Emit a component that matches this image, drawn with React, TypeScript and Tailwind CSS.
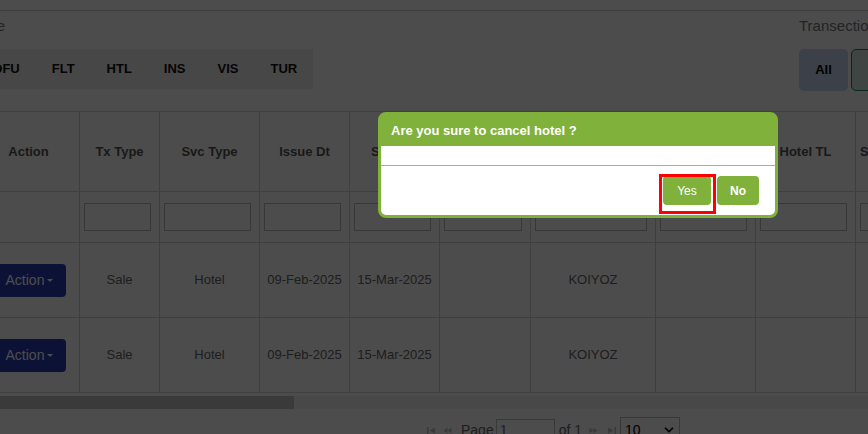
import { ChevronDown } from 'lucide-react'

const serviceTabs = ['DFU', 'FLT', 'HTL', 'INS', 'VIS', 'TUR']

const columns = [
  { title: 'Action', col: 'w-[102px]', filter: false },
  { title: 'Tx Type', col: 'w-[80px]', filter: true },
  { title: 'Svc Type', col: 'w-[100px]', filter: true },
  { title: 'Issue Dt', col: 'w-[90px]', filter: true },
  { title: 'Start Dt', col: 'w-[90px]', filter: true },
  { title: 'End Dt', col: 'w-[91px]', filter: true },
  { title: 'Conf No', col: 'w-[125px]', filter: true },
  { title: 'Hotel Name', col: 'w-[100px]', filter: true },
  { title: 'Hotel TL', col: 'w-[100px]', filter: true },
  { title: 'Supplier Name', col: 'w-[100px]', filter: true },
  { title: 'Status', col: 'w-[100px]', filter: true },
]

const rows = [
  ['Sale', 'Hotel', '09-Feb-2025', '15-Mar-2025', '', 'KOIYOZ', '', '', '', ''],
  ['Sale', 'Hotel', '09-Feb-2025', '15-Mar-2025', '', 'KOIYOZ', '', '', '', ''],
]

const SeekIcon = ({ flip, bar }: { flip?: boolean; bar?: boolean }) => (
  <svg width="9" height="7" viewBox="0 0 9 7" className={flip ? '-scale-x-100' : ''} fill="#c4c4c4">
    {bar ? (
      <>
        <rect x="0" y="0" width="1.5" height="7" />
        <path d="M8 0.5 L2.5 3.5 L8 6.5Z" />
      </>
    ) : (
      <>
        <path d="M4.5 0.5 L0.5 3.5 L4.5 6.5Z" />
        <path d="M8.5 0.5 L4.5 3.5 L8.5 6.5Z" />
      </>
    )}
  </svg>
)

const ConfirmDialog = () => (
  <div className="absolute left-[378px] top-[112px] z-20 w-[400px] rounded-[8px] border-[3px] border-[#80b13b] bg-[#80b13b]">
    <div className="flex h-[31px] items-center pl-[10px] text-[13px] font-bold text-white">
      Are you sure to cancel hotel ?
    </div>
    <div className="rounded-b-[5px] bg-white">
      <div className="h-[19px]" />
      <div className="flex justify-end gap-[6px] border-t border-[#a8a8a8] py-[10px] pr-[16px]">
        <div className="relative">
          <button className="h-[29px] w-[48px] rounded-[4px] bg-[#80b13b] text-[12px] text-white">Yes</button>
          <span className="pointer-events-none absolute -left-[4px] -top-[2px] h-[40px] w-[57px] border-[3px] border-[#ff0000]" />
        </div>
        <button className="h-[29px] w-[42px] rounded-[4px] bg-[#80b13b] text-[12px] font-bold text-white">No</button>
      </div>
    </div>
  </div>
)

export default function App() {
  return (
    <div className="relative h-[434px] w-[868px] overflow-hidden bg-white font-['Liberation_Sans',Arial,sans-serif]">
      <div className="h-[11px] border-b border-[#d0d0d0]" />

      <div className="-ml-[23px] grid grid-cols-[822px_auto] pt-[6px]">
        <div>
          <div className="flex h-[17px] w-[28px] justify-end overflow-hidden whitespace-nowrap text-[15px] leading-[17px] text-[#777]">
            Service Type
          </div>
          <div className="mt-[15px] flex h-[40px] w-fit items-center bg-[#eeeeee]">
            {serviceTabs.map((tab) => (
              <span key={tab} className="px-[16px] text-[13px] font-bold text-[#111]">
                {tab}
              </span>
            ))}
          </div>
        </div>
        <div>
          <div className="h-[17px] whitespace-nowrap text-[15px] leading-[17px] text-[#777]">Transection Type</div>
          <div className="mt-[15px] flex gap-[3px]">
            <button className="h-[42px] w-[49px] rounded-[5px] bg-[#c5d8f3] text-[13px] font-bold text-black">All</button>
            <button className="h-[42px] w-[60px] rounded-[5px] border border-[#198754] bg-[#d1e7dd] text-[13px] font-bold text-black">
              Sale
            </button>
          </div>
        </div>
      </div>

      <div className="-ml-[23px] mt-[20px] overflow-hidden">
        <table className="w-[1078px] table-fixed border-collapse text-[13px]">
          <colgroup>
            {columns.map((c) => (
              <col key={c.title} className={c.col} />
            ))}
          </colgroup>
          <thead>
            <tr>
              {columns.map((c) => (
                <th
                  key={c.title}
                  className="h-[80px] whitespace-nowrap border border-[#d4d4d4] px-[4px] text-center font-bold text-[#555]"
                >
                  {c.title}
                </th>
              ))}
            </tr>
            <tr>
              {columns.map((c) => (
                <td key={c.title} className="h-[51px] border border-[#d4d4d4] pl-[4px] pr-[8px]">
                  {c.filter && <input className="block h-[28px] w-full border border-[#bdbdbd] bg-white" />}
                </td>
              ))}
            </tr>
          </thead>
          <tbody>
            {rows.map((row, i) => (
              <tr key={i}>
                <td className="h-[75px] border border-[#d4d4d4]">
                  <button className="mx-auto flex h-[33px] w-[74px] items-center justify-center gap-[3px] rounded-[4px] bg-[#2b39b4] pl-[2px] text-[14px] text-white">
                    Action
                    <span className="border-x-[3px] border-t-[3px] border-x-transparent border-t-white" />
                  </button>
                </td>
                {row.map((cell, j) => (
                  <td key={j} className="h-[75px] border border-[#d4d4d4] text-center text-[#666]">
                    {cell}
                  </td>
                ))}
              </tr>
            ))}
          </tbody>
        </table>
      </div>

      <div className="mt-[3px] h-[13px] bg-[#f1f1f1]">
        <div className="h-full w-[294px] bg-[#c1c1c1]" />
      </div>

      <div className="mt-[8px] flex h-[26px] items-center pl-[427px] text-[14px] text-[#666]">
        <SeekIcon bar />
        <span className="ml-[7px]">
          <SeekIcon />
        </span>
        <span className="ml-[9px]">Page</span>
        <input defaultValue="1" className="ml-[2px] h-[22px] w-[59px] border border-[#bdbdbd] bg-white px-[3px] text-[14px] text-[#666]" />
        <span className="ml-[4px]">of 1</span>
        <span className="ml-[7px]">
          <SeekIcon flip />
        </span>
        <span className="ml-[9px]">
          <SeekIcon flip bar />
        </span>
        <div className="ml-[4px] flex h-[26px] w-[60px] items-center justify-between border border-[#bdbdbd] bg-white pl-[4px] pr-[3px] text-[14px] text-black">
          10
          <ChevronDown size={14} strokeWidth={3} />
        </div>
      </div>

      <div className="absolute inset-0 z-10 bg-black/70" />
      <ConfirmDialog />
    </div>
  )
}
